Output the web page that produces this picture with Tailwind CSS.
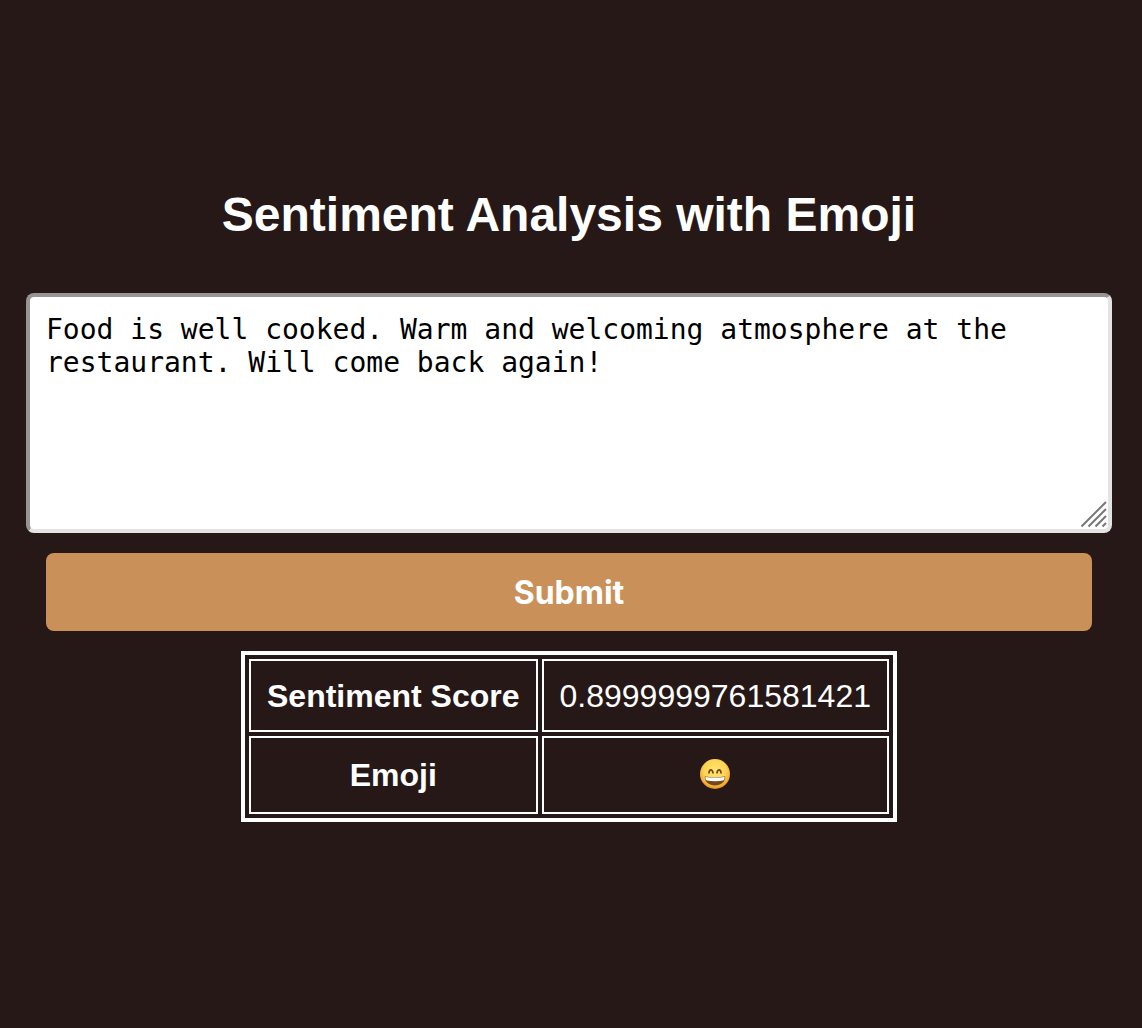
<!DOCTYPE html>
<html lang="en">
<head>
<meta charset="utf-8">
<title>Sentiment Analysis with Emoji</title>
<script src="https://cdn.jsdelivr.net/npm/@tailwindcss/browser@4"></script>
</head>
<body class="min-h-screen bg-[#271818] font-['Liberation_Sans',Arial,sans-serif] text-white">
<main class="flex min-h-screen flex-col items-center justify-center pr-[30px] pb-5 pl-[26px]">
  <h1 class="mb-[50px] text-[48px] leading-[56px] font-bold">Sentiment Analysis with Emoji</h1>
  <form class="flex w-full flex-col">
    <div class="relative flex">
      <textarea aria-label="Text to analyse" class="h-60 w-full resize-none rounded-lg border-4 border-t-[#979494] border-r-[#e3e3e3] border-b-[#e3e3e3] border-l-[#979494] bg-white p-4 font-['DejaVu_Sans_Mono',monospace] text-[28px] leading-[33px] text-black outline-none">Food is well cooked. Warm and welcoming atmosphere at the restaurant. Will come back again!</textarea>
      <svg class="pointer-events-none absolute right-1 bottom-1 h-7 w-7" viewBox="0 0 28 28" fill="none" stroke="#777" stroke-width="2" aria-hidden="true"><path d="M1.5 25.5 26 1M8.5 25.5 26 8M15.5 25.5 26 15M22.5 25.5 26 22"/></svg>
    </div>
    <button type="button" class="mx-5 my-5 h-[78px] rounded-lg bg-[#c99159] pt-0.5 font-['Inter',sans-serif] text-[32px] font-bold">Submit</button>
  </form>
  <table class="border-separate border-spacing-1 border-4 border-white text-center text-[32px]">
    <tr class="h-[73px]"><th class="border-2 border-white px-4 pt-0.5 font-bold">Sentiment Score</th><td class="border-2 border-white px-4 pt-0.5">0.8999999761581421</td></tr>
    <tr class="h-[78px]"><th class="border-2 border-white px-4 font-bold">Emoji</th><td class="border-2 border-white px-4 pb-0.5">
      <svg class="mx-auto h-8 w-8" viewBox="0 0 32 32" role="img" aria-label="😄">
        <defs>
          <radialGradient id="face" cx=".5" cy=".4" r=".62"><stop offset="0" stop-color="#ffe873"/><stop offset=".6" stop-color="#fdd352"/><stop offset=".85" stop-color="#f2ab36"/><stop offset="1" stop-color="#cf7f22"/></radialGradient>
        </defs>
        <circle cx="16" cy="16" r="15" fill="url(#face)"/>
        <path d="M10 14.800c.4-3.800 3.200-3.800 4 0M18 14.800c.8-3.800 3.600-3.800 4 0" fill="none" stroke="#764315" stroke-width="1.700" stroke-linecap="round"/>
        <path d="M5.800 18.500c6.400.9 14 .9 20.400 0 .3 5.500-4.400 8.900-10.200 8.900S5.500 24 5.800 18.500Z" fill="#754719"/>
        <path d="M6.500 19c6.200.8 12.800.8 19 0 .3 2-.3 3.200-1.400 3.500-5.200.9-11 .9-16.200 0-1.100-.3-1.700-1.500-1.400-3.500Z" fill="#fff"/>
      </svg>
    </td></tr>
  </table>
</main>
</body>
</html>
